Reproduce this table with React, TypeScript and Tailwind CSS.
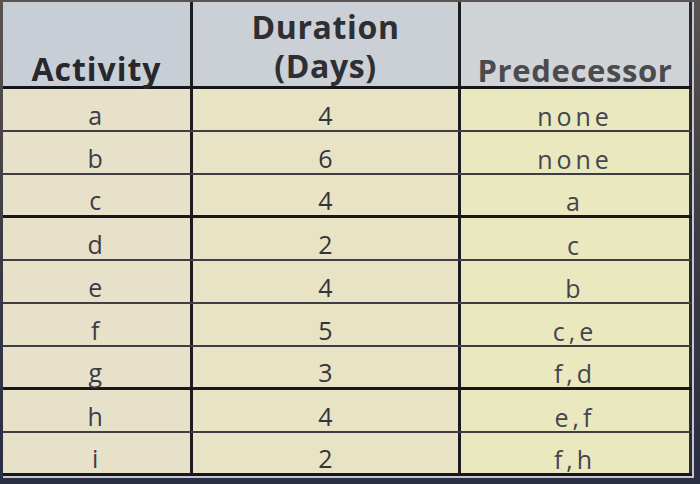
import React from "react";

const rows: { a: string; d: string; p: string; thick?: boolean }[] = [
  { a: "a", d: "4", p: "none" },
  { a: "b", d: "6", p: "none" },
  { a: "c", d: "4", p: "a", thick: true },
  { a: "d", d: "2", p: "c" },
  { a: "e", d: "4", p: "b" },
  { a: "f", d: "5", p: "c,e" },
  { a: "g", d: "3", p: "f,d", thick: true },
  { a: "h", d: "4", p: "e,f" },
  { a: "i", d: "2", p: "f,h", thick: true },
];

export default function App() {
  return (
    <div
      className="w-[700px] h-[484px] flex flex-col pt-[2px] pl-[3px] pr-[6px] pb-[6px] bg-gradient-to-b from-[#5a5350] via-[#3c3b45] to-[#2a2e44]"
      style={{ fontFamily: '"Open Sans", "DejaVu Sans", sans-serif' }}
    >
      <div className="flex flex-col border-b-2 border-r-2 border-[#c4c7cf]">
        {/* header */}
        <div className="flex h-[87px] border-b-[3px] border-[#16161a]">
          <div className="w-[190px] border-r-[3px] border-[#1c1c20] bg-[#c8ced5] flex items-end justify-center pb-[1px]">
            <span className="text-[32px] font-bold leading-none text-[#27272c] tracking-[0.03em]">Activity</span>
          </div>
          <div className="w-[268px] border-r-[3px] border-[#1c1c20] bg-[#cad0d5] flex flex-col items-center justify-end pb-[1px]">
            <span className="text-[32px] font-bold leading-[41px] text-[#2e2e33] tracking-[0.02em]">Duration</span>
            <span className="text-[32px] font-bold leading-[38px] text-[#2e2e33] tracking-[0.02em]">(Days)</span>
          </div>
          <div className="flex-1 border-r-[3px] border-[#2a2a30] bg-[#d1d4d6] flex items-end justify-center">
            <span className="text-[31px] font-bold leading-none text-[#4a4a4f] tracking-[0.02em]">Predecessor</span>
          </div>
        </div>
        {rows.map((r, i) => (
          <div
            key={i}
            className={`flex h-[43px] ${r.thick ? "border-b-[3px] border-[#18181c]" : "border-b-2 border-[#3e3d44]"}`}
          >
            <div className="w-[190px] border-r-[3px] border-[#1c1c20] bg-[#e6e1c8] flex items-end justify-center pb-[2px]">
              <span className="text-[25px] leading-none text-[#3c3c48] tracking-[0.1em]">{r.a}</span>
            </div>
            <div className="w-[268px] border-r-[3px] border-[#1c1c20] bg-[#e7e3c4] flex items-end justify-center pb-[2px]">
              <span className="text-[25px] leading-none text-[#34343c]">{r.d}</span>
            </div>
            <div className="flex-1 border-r-[3px] border-[#2a2a30] bg-[#e9e8bf] flex items-end justify-center pb-[1px]">
              <span className="text-[25px] leading-none text-[#44444e] tracking-[0.16em]">{r.p}</span>
            </div>
          </div>
        ))}
      </div>
    </div>
  );
}
